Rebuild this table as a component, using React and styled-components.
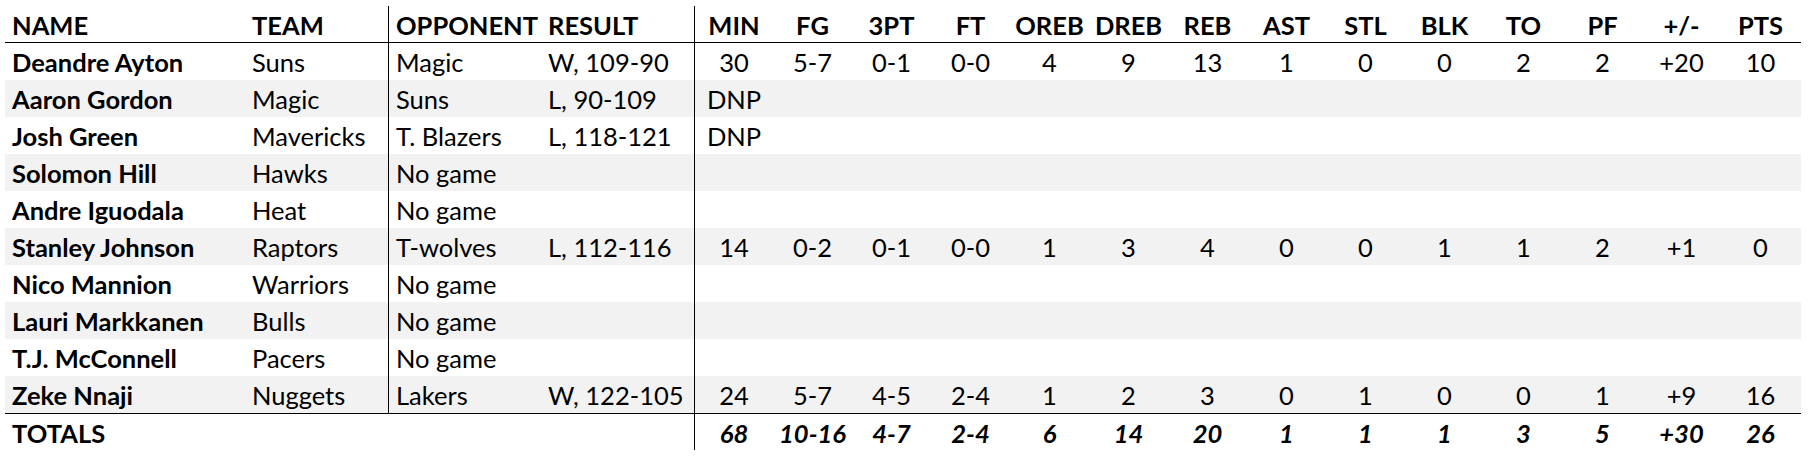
import React from 'react';
import styled, { createGlobalStyle } from 'styled-components';

const GlobalStyle = createGlobalStyle`
  html, body {
    margin: 0;
    padding: 0;
    background: #ffffff;
  }
  body {
    font-family: Lato, "Noto Sans", "Liberation Sans", sans-serif;
    color: #000000;
  }
`;

const COLUMNS = '240px 143px 153px 153px repeat(14, 79px)';

const STAT_HEADERS = ['MIN', 'FG', '3PT', 'FT', 'OREB', 'DREB', 'REB', 'AST', 'STL', 'BLK', 'TO', 'PF', '+/-', 'PTS'];

const PLAYERS = [
  { name: 'Deandre Ayton', team: 'Suns', opp: 'Magic', result: 'W, 109-90', stats: ['30', '5-7', '0-1', '0-0', '4', '9', '13', '1', '0', '0', '2', '2', '+20', '10'] },
  { name: 'Aaron Gordon', team: 'Magic', opp: 'Suns', result: 'L, 90-109', stats: ['DNP'] },
  { name: 'Josh Green', team: 'Mavericks', opp: 'T. Blazers', result: 'L, 118-121', stats: ['DNP'] },
  { name: 'Solomon Hill', team: 'Hawks', opp: 'No game', result: '', stats: [] },
  { name: 'Andre Iguodala', team: 'Heat', opp: 'No game', result: '', stats: [] },
  { name: 'Stanley Johnson', team: 'Raptors', opp: 'T-wolves', result: 'L, 112-116', stats: ['14', '0-2', '0-1', '0-0', '1', '3', '4', '0', '0', '1', '1', '2', '+1', '0'] },
  { name: 'Nico Mannion', team: 'Warriors', opp: 'No game', result: '', stats: [] },
  { name: 'Lauri Markkanen', team: 'Bulls', opp: 'No game', result: '', stats: [] },
  { name: 'T.J. McConnell', team: 'Pacers', opp: 'No game', result: '', stats: [] },
  { name: 'Zeke Nnaji', team: 'Nuggets', opp: 'Lakers', result: 'W, 122-105', stats: ['24', '5-7', '4-5', '2-4', '1', '2', '3', '0', '1', '0', '0', '1', '+9', '16'] },
];

const TOTALS = ['68', '10-16', '4-7', '2-4', '6', '14', '20', '1', '1', '1', '3', '5', '+30', '26'];

export default function App() {
  return (
    <>
      <GlobalStyle />
      <Page>
        <Table>
          <HeaderRow>
            <Cell $bold>NAME</Cell>
            <Cell $bold>TEAM</Cell>
            <Cell $bold $divider>OPPONENT</Cell>
            <Cell $bold>RESULT</Cell>
            {STAT_HEADERS.map((h, i) => (
              <Cell key={h} $bold $center $divider={i === 0}>{h}</Cell>
            ))}
          </HeaderRow>
          {PLAYERS.map((p, idx) => (
            <Row key={p.name} $shade={idx % 2 === 1}>
              <Cell $bold>{p.name}</Cell>
              <Cell>{p.team}</Cell>
              <Cell $divider>{p.opp}</Cell>
              <Cell>{p.result}</Cell>
              {STAT_HEADERS.map((h, i) => (
                <Cell key={h} $center $divider={i === 0}>{p.stats[i] || ''}</Cell>
              ))}
            </Row>
          ))}
          <TotalsRow>
            <Cell $bold>TOTALS</Cell>
            <Cell />
            <Cell />
            <Cell />
            {TOTALS.map((t, i) => (
              <Cell key={i} $bold $italic $center $divider={i === 0}>{t}</Cell>
            ))}
          </TotalsRow>
        </Table>
      </Page>
    </>
  );
}

const Page = styled.div`
  padding: 6px 0 0 5px;
  width: 1813px;
  height: 469px;
  box-sizing: border-box;
`;

const Table = styled.div`
  display: flex;
  flex-direction: column;
  width: 1796px;
`;

const RowBase = styled.div`
  display: grid;
  grid-template-columns: ${COLUMNS};
  height: 37px;
  box-sizing: border-box;
`;

const HeaderRow = styled(RowBase)`
  border-bottom: 1px solid #000000;
`;

const Row = styled(RowBase)`
  background: ${(p) => (p.$shade ? '#f2f2f2' : '#ffffff')};
`;

const TotalsRow = styled(RowBase)`
  border-top: 1px solid #000000;
`;

const Cell = styled.div`
  box-sizing: border-box;
  height: 100%;
  padding: 1px 0 0 7px;
  font-size: 25.5px;
  line-height: 36px;
  white-space: nowrap;
  overflow: hidden;
  font-weight: ${(p) => (p.$bold ? 700 : 400)};
  font-style: ${(p) => (p.$italic ? 'italic' : 'normal')};
  text-align: ${(p) => (p.$center ? 'center' : 'left')};
  ${(p) => p.$center && 'padding-left: 0;'}
  border-left: ${(p) => (p.$divider ? '1px solid #000000' : 'none')};
`;
